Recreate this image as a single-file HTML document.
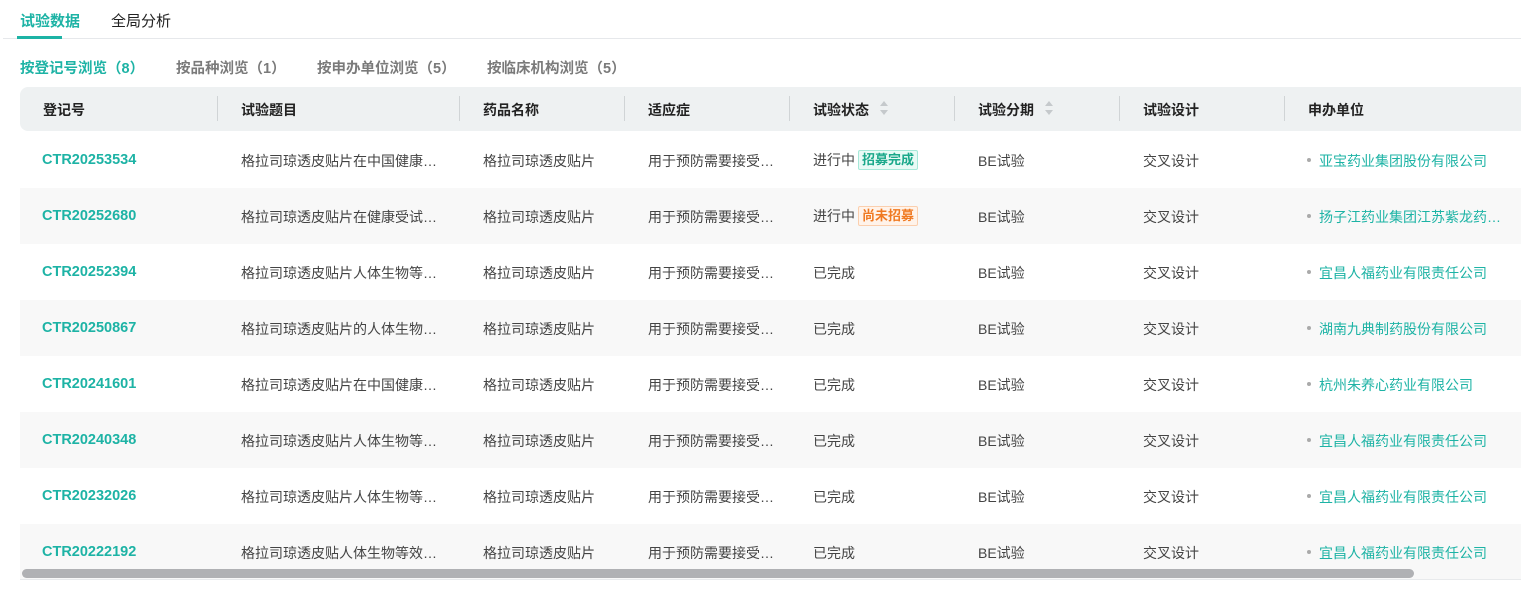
<!DOCTYPE html><html><head><meta charset="utf-8"><style>
*{margin:0;padding:0;box-sizing:border-box}
body{width:1521px;height:599px;background:#fff;font-family:"Liberation Sans","Noto Sans CJK SC",sans-serif;font-size:14px;color:#333;position:relative;overflow:hidden}
.t{position:absolute;white-space:nowrap}
.tab1{left:20px;top:10px;font-weight:bold;color:#1db3a5;font-size:15px}
.tab2{left:111px;top:10px;font-size:15px;color:#222}
.ul{position:absolute;left:17px;top:36px;width:45px;height:3px;background:#1db3a5}
.line{position:absolute;left:3px;top:38px;width:1518px;height:1px;background:#e6e8eb}
.sub{top:57px;font-size:14.5px;color:#7a7a7a;font-weight:bold}
.hdr{position:absolute;left:20px;top:87px;width:1501px;height:44px;background:#eef1f2;border-radius:8px 0 0 8px}
.sep{position:absolute;top:96px;width:1px;height:25px;background:#d0d4d6}
.h{top:100px;font-weight:bold;color:#222}
.row{position:absolute;left:20px;width:1501px;height:56px}
.g{background:#f8f8f8}
.c{position:absolute;top:19px;white-space:nowrap;font-size:14px;color:#444}
.c.teal{color:#1db3a5}
.c.id{font-weight:bold;color:#1db3a5;font-size:14.5px;top:20px}
.tag{display:inline-block;font-size:13px;font-weight:bold;padding:0 3px;line-height:18px;border-radius:2px;margin-left:3px;vertical-align:1px}
.tg{color:#1aa88a;background:#e8faf5;border:1px solid #a6e8d8}
.to{color:#f07a22;background:#fff3ea;border:1px solid #fbcfae}
.dot{position:absolute;left:1287px;top:26px;width:4px;height:4px;border-radius:2px;background:#aaa}
.arr{position:absolute;width:0;height:0;border-left:4px solid transparent;border-right:4px solid transparent}
</style></head><body>
<div class="t tab1">试验数据</div><div class="t tab2">全局分析</div>
<div class="line"></div><div class="ul"></div>
<div class="t sub" style="left:20px;color:#1db3a5">按登记号浏览（8）</div>
<div class="t sub" style="left:176px">按品种浏览（1）</div>
<div class="t sub" style="left:317px">按申办单位浏览（5）</div>
<div class="t sub" style="left:487px">按临床机构浏览（5）</div>
<div class="hdr"></div>
<div class="sep" style="left:217px"></div><div class="sep" style="left:459px"></div><div class="sep" style="left:624px"></div><div class="sep" style="left:789px"></div><div class="sep" style="left:954px"></div><div class="sep" style="left:1119px"></div><div class="sep" style="left:1284px"></div>
<div class="t h" style="left:43px">登记号</div><div class="t h" style="left:241px">试验题目</div><div class="t h" style="left:483px">药品名称</div><div class="t h" style="left:648px">适应症</div><div class="t h" style="left:813px">试验状态</div><div class="t h" style="left:978px">试验分期</div><div class="t h" style="left:1143px">试验设计</div><div class="t h" style="left:1308px">申办单位</div>
<div class="arr" style="left:880px;top:101px;border-bottom:5px solid #c5c9cc"></div><div class="arr" style="left:880px;top:110px;border-top:5px solid #c5c9cc"></div>
<div class="arr" style="left:1045px;top:101px;border-bottom:5px solid #c5c9cc"></div><div class="arr" style="left:1045px;top:110px;border-top:5px solid #c5c9cc"></div>
<div style="position:absolute;left:20px;top:579px;width:1501px;height:1px;background:#e8eaec"></div>
<div class="row" style="top:132px"><div class="c id" style="left:22px">CTR20253534</div><div class="c" style="left:221px">格拉司琼透皮贴片在中国健康…</div><div class="c" style="left:463px">格拉司琼透皮贴片</div><div class="c" style="left:628px">用于预防需要接受…</div><div class="c" style="left:793px;top:18px">进行中<span class="tag tg">招募完成</span></div><div class="c" style="left:958px">BE试验</div><div class="c" style="left:1123px">交叉设计</div><div class="dot"></div><div class="c teal" style="left:1299px">亚宝药业集团股份有限公司</div></div>
<div class="row g" style="top:188px"><div class="c id" style="left:22px">CTR20252680</div><div class="c" style="left:221px">格拉司琼透皮贴片在健康受试…</div><div class="c" style="left:463px">格拉司琼透皮贴片</div><div class="c" style="left:628px">用于预防需要接受…</div><div class="c" style="left:793px;top:18px">进行中<span class="tag to">尚未招募</span></div><div class="c" style="left:958px">BE试验</div><div class="c" style="left:1123px">交叉设计</div><div class="dot"></div><div class="c teal" style="left:1299px">扬子江药业集团江苏紫龙药…</div></div>
<div class="row" style="top:244px"><div class="c id" style="left:22px">CTR20252394</div><div class="c" style="left:221px">格拉司琼透皮贴片人体生物等…</div><div class="c" style="left:463px">格拉司琼透皮贴片</div><div class="c" style="left:628px">用于预防需要接受…</div><div class="c" style="left:793px">已完成</div><div class="c" style="left:958px">BE试验</div><div class="c" style="left:1123px">交叉设计</div><div class="dot"></div><div class="c teal" style="left:1299px">宜昌人福药业有限责任公司</div></div>
<div class="row g" style="top:300px"><div class="c id" style="left:22px">CTR20250867</div><div class="c" style="left:221px">格拉司琼透皮贴片的人体生物…</div><div class="c" style="left:463px">格拉司琼透皮贴片</div><div class="c" style="left:628px">用于预防需要接受…</div><div class="c" style="left:793px">已完成</div><div class="c" style="left:958px">BE试验</div><div class="c" style="left:1123px">交叉设计</div><div class="dot"></div><div class="c teal" style="left:1299px">湖南九典制药股份有限公司</div></div>
<div class="row" style="top:356px"><div class="c id" style="left:22px">CTR20241601</div><div class="c" style="left:221px">格拉司琼透皮贴片在中国健康…</div><div class="c" style="left:463px">格拉司琼透皮贴片</div><div class="c" style="left:628px">用于预防需要接受…</div><div class="c" style="left:793px">已完成</div><div class="c" style="left:958px">BE试验</div><div class="c" style="left:1123px">交叉设计</div><div class="dot"></div><div class="c teal" style="left:1299px">杭州朱养心药业有限公司</div></div>
<div class="row g" style="top:412px"><div class="c id" style="left:22px">CTR20240348</div><div class="c" style="left:221px">格拉司琼透皮贴片人体生物等…</div><div class="c" style="left:463px">格拉司琼透皮贴片</div><div class="c" style="left:628px">用于预防需要接受…</div><div class="c" style="left:793px">已完成</div><div class="c" style="left:958px">BE试验</div><div class="c" style="left:1123px">交叉设计</div><div class="dot"></div><div class="c teal" style="left:1299px">宜昌人福药业有限责任公司</div></div>
<div class="row" style="top:468px"><div class="c id" style="left:22px">CTR20232026</div><div class="c" style="left:221px">格拉司琼透皮贴片人体生物等…</div><div class="c" style="left:463px">格拉司琼透皮贴片</div><div class="c" style="left:628px">用于预防需要接受…</div><div class="c" style="left:793px">已完成</div><div class="c" style="left:958px">BE试验</div><div class="c" style="left:1123px">交叉设计</div><div class="dot"></div><div class="c teal" style="left:1299px">宜昌人福药业有限责任公司</div></div>
<div class="row g" style="top:524px;height:55px"><div class="c id" style="left:22px">CTR20222192</div><div class="c" style="left:221px">格拉司琼透皮贴人体生物等效…</div><div class="c" style="left:463px">格拉司琼透皮贴片</div><div class="c" style="left:628px">用于预防需要接受…</div><div class="c" style="left:793px">已完成</div><div class="c" style="left:958px">BE试验</div><div class="c" style="left:1123px">交叉设计</div><div class="dot"></div><div class="c teal" style="left:1299px">宜昌人福药业有限责任公司</div></div>
<div style="position:absolute;left:22px;top:569px;width:1392px;height:9px;border-radius:5px;background:#b0b1b4"></div>
</body></html>
